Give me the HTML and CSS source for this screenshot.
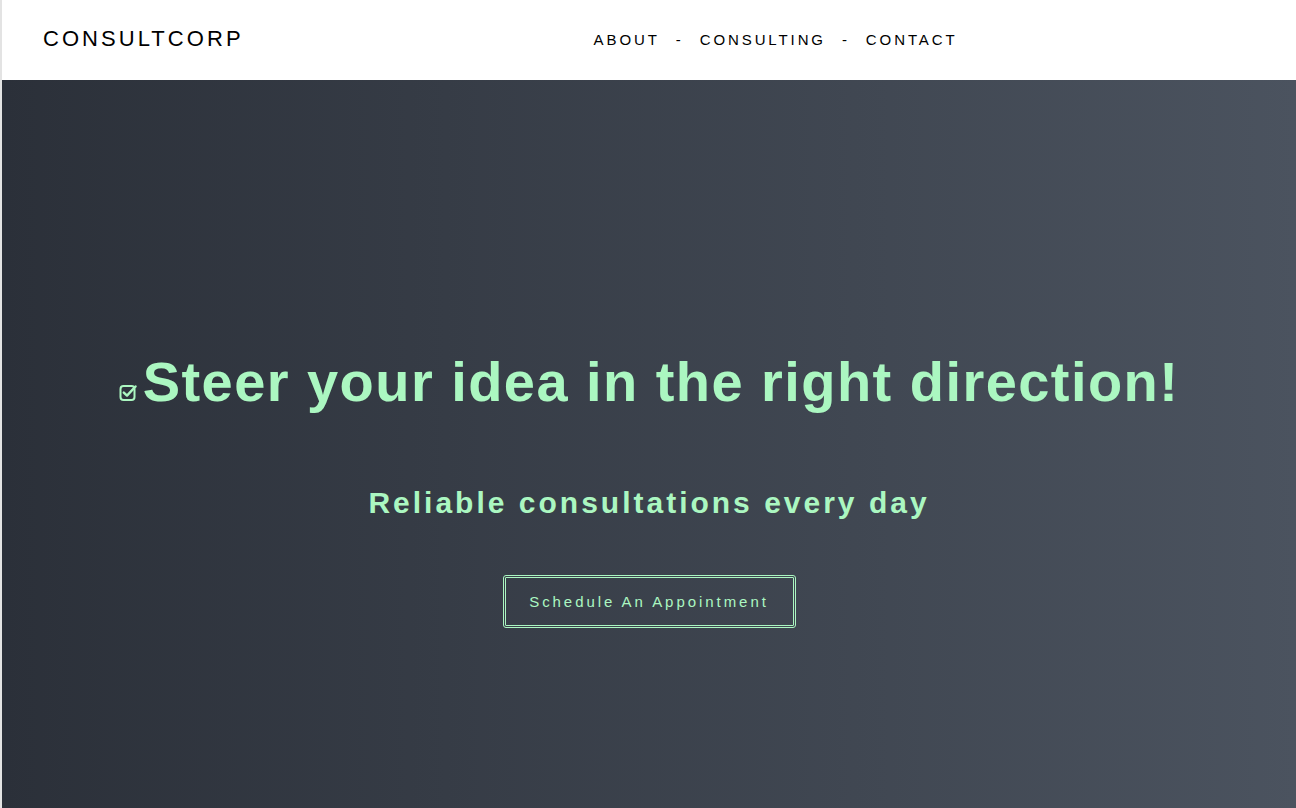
FILE: index.html
```html
<!DOCTYPE html>
<html lang="en">
<head>
<meta charset="utf-8">
<title>ConsultCorp</title>
<link rel="stylesheet" href="styles.css">
</head>
<body>
<header class="site-header">
  <div class="logo">CONSULTCORP</div>
  <nav class="nav">
    <a href="#">ABOUT</a>
    <span class="sep">-</span>
    <a href="#">CONSULTING</a>
    <span class="sep">-</span>
    <a href="#">CONTACT</a>
  </nav>
</header>
<main class="hero">
  <h1 class="hero-title"><svg class="check" viewBox="0 0 18 18" width="18" height="18" aria-hidden="true"><rect x="1.5" y="3" width="14" height="14" rx="3" fill="none" stroke="currentColor" stroke-width="2"/><path d="M4.8 9.6 L8 12.6 L16.5 3.5" fill="none" stroke="currentColor" stroke-width="2.4" stroke-linecap="round" stroke-linejoin="round"/></svg>Steer your idea in the right direction!</h1>
  <p class="hero-sub">Reliable consultations every day</p>
  <a class="btn" href="#">Schedule An Appointment</a>
</main>
</body>
</html>
```
FILE: styles.css
```css
* { box-sizing: border-box; }
html, body { margin: 0; padding: 0; }
body {
  font-family: "Liberation Sans", Arial, sans-serif;
  border-left: 2px solid #e3e3e3;
  min-height: 100vh;
  background: #fff;
}
.site-header {
  height: 80px;
  display: flex;
  align-items: center;
  background: #fff;
  padding-left: 41px;
  padding-bottom: 2px;
}
.logo {
  font-size: 22px;
  letter-spacing: 3.05px;
  color: #000;
}
.nav {
  margin-left: 350px;
  display: flex;
  gap: 16px;
  font-size: 15px;
  letter-spacing: 2.9px;
  color: #000;
}
.nav a { color: #000; text-decoration: none; }
.hero {
  min-height: 728px;
  background: linear-gradient(to right, #2b3039 0%, #4b535f 100%);
  display: flex;
  flex-direction: column;
  align-items: center;
  padding-top: 270px;
  color: #abf7c1;
}
.hero-title {
  margin: 0;
  font-size: 56px;
  font-weight: 700;
  letter-spacing: 1.45px;
  line-height: 64px;
  display: flex;
  align-items: flex-end;
  white-space: nowrap;
}
.check {
  width: 18px;
  height: 18px;
  margin: 0 6px 13px 0;
  flex: none;
}
.hero-sub {
  margin: 72px 0 0;
  font-size: 30px;
  font-weight: 700;
  letter-spacing: 3px;
  line-height: 34px;
}
.btn {
  margin-top: 55px;
  display: inline-block;
  width: 293px;
  height: 53px;
  line-height: 47px;
  text-align: center;
  border: 3px double #abf7c1;
  border-radius: 3px;
  color: #abf7c1;
  text-decoration: none;
  font-size: 15px;
  letter-spacing: 2.95px;
}
```
